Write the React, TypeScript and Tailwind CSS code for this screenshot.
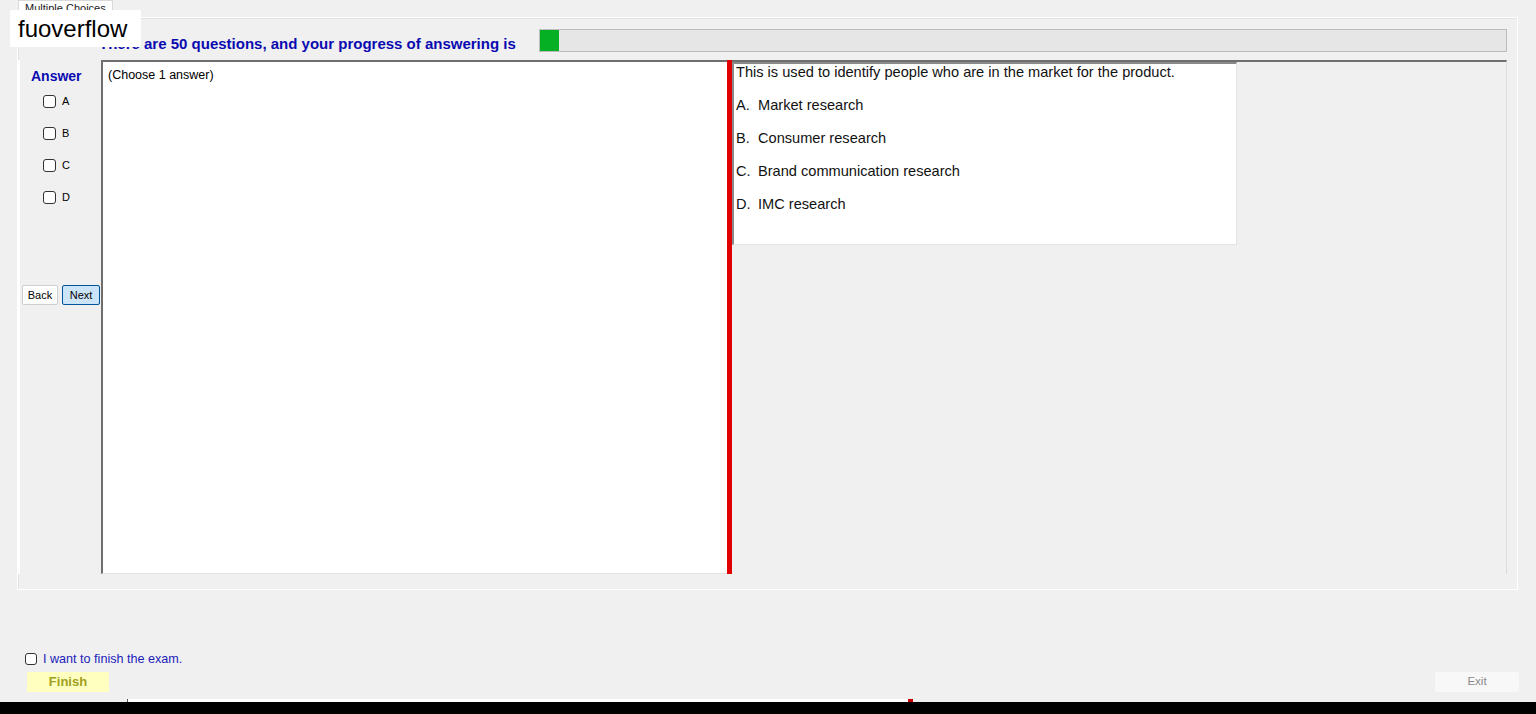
import React from 'react';

const Check: React.FC<{ label: string }> = ({ label }) => (
  <div className="flex items-center gap-[6px] h-[32px] pl-[23px]">
    <span className="w-[13px] h-[13px] rounded-[3px] border border-[#333] bg-white" />
    <span className="text-[11px] text-black">{label}</span>
  </div>
);

const options = ['Market research', 'Consumer research', 'Brand communication research', 'IMC research'];

export default function App() {
  return (
    <div className="relative w-full h-[714px] bg-[#f0f0f0] overflow-hidden flex flex-col" style={{ fontFamily: '"Liberation Sans", Arial, sans-serif' }}>
      <div className="absolute left-[10px] top-[10px] w-[131px] h-[37px] bg-white flex items-center pl-[8px] text-[24px] text-black z-10">
        fuoverflow
      </div>

      {/* tab header */}
      <div className="h-[17px] flex pl-[18px]">
        <div className="h-[14px] px-[6px] bg-white border border-b-0 border-[#d9d9d9] text-[11px] leading-[14px] text-[#222]">Multiple Choices</div>
      </div>

      {/* tab page */}
      <div className="ml-[17px] mr-[18px] h-[573px] border border-white shadow-[inset_1px_1px_0_#e3e3e3] flex flex-col">
        <div className="flex items-center h-[23px] mt-[11px] pl-[81px] gap-[16px]">
          <span className="w-[424px] pt-[7px] text-[15px] font-bold text-[#0a0ab0] whitespace-nowrap">There are 50 questions, and your progress of answering is</span>
          <div className="flex-1 h-[23px] mr-[10px] border border-[#bcbcbc] bg-[#e6e6e6] flex">
            <div className="w-[19px] h-full bg-[#06b025]" />
          </div>
        </div>

        <div className="flex mt-[8px] h-[514px]">
          <div className="w-[83px] flex flex-col border-l-2 border-white">
            <div className="text-[14px] font-bold text-[#0a0ab0] pl-[11px] pt-[6px] h-[25px]">Answer</div>
            <Check label="A" />
            <Check label="B" />
            <Check label="C" />
            <Check label="D" />
            <div className="flex gap-[4px] pl-[2px] mt-[72px]">
              <button className="w-[36px] h-[20px] bg-white border border-[#cfcfcf] rounded-[2px] text-[11px] text-black">Back</button>
              <button className="w-[38px] h-[20px] bg-[#cce4f7] border border-[#005499] rounded-[2px] text-[11px] text-black">Next</button>
            </div>
          </div>

          <div className="w-[626px] bg-white border-l-2 border-t-2 border-[#6e6e6e] border-b border-b-[#e3e3e3] pl-[5px] pt-[4px] text-[12.5px] text-black">
            (Choose 1 answer)
          </div>

          <div className="w-[5px] bg-[#e00000]" />

          <div className="flex-1 border-t-2 border-[#6e6e6e] border-r border-r-[#dcdcdc] mr-[10px] flex">
            <div className="w-[505px] h-[183px] bg-white border-l-2 border-t-2 border-[#8a8a8a] border-r border-r-[#e3e3e3] border-b border-b-[#e3e3e3] pl-[2px] text-[14.6px] text-[#111]">
              <div className="h-[19px] leading-[16px]">This is used to identify people who are in the market for the product.</div>
              {options.map((o, i) => (
                <div key={o} className="h-[33px] pt-[13px] leading-[18px] flex">
                  <span className="w-[22px]">{'ABCD'[i]}.</span>
                  <span>{o}</span>
                </div>
              ))}
            </div>
          </div>
        </div>
      </div>

      <div className="flex-1 flex flex-col justify-end pb-[7px]">
        <div className="flex items-center gap-[6px] pl-[25px] h-[14px]">
          <span className="w-[12px] h-[12px] rounded-[3px] border border-[#333] bg-white" />
          <span className="text-[12.6px] text-[#2222bb]">I want to finish the exam.</span>
        </div>
        <div className="flex justify-between items-center mt-[6px] pl-[27px] pr-[17px]">
          <div className="w-[82px] h-[20px] bg-[#ffffc0] flex items-center justify-center text-[13px] font-bold text-[#a0a020]">Finish</div>
          <div className="w-[84px] h-[20px] bg-[#f8f8f8] rounded-[3px] flex items-center justify-center text-[11.5px] text-[#8a8a8a]">Exit</div>
        </div>
      </div>

      <div className="h-[3px] flex">
        <div className="w-[127px]" />
        <div className="w-[781px] bg-white border-l border-[#555]" />
        <div className="w-[5px] bg-[#c00]" />
      </div>
      <div className="h-[12px] bg-black" />
    </div>
  );
}
